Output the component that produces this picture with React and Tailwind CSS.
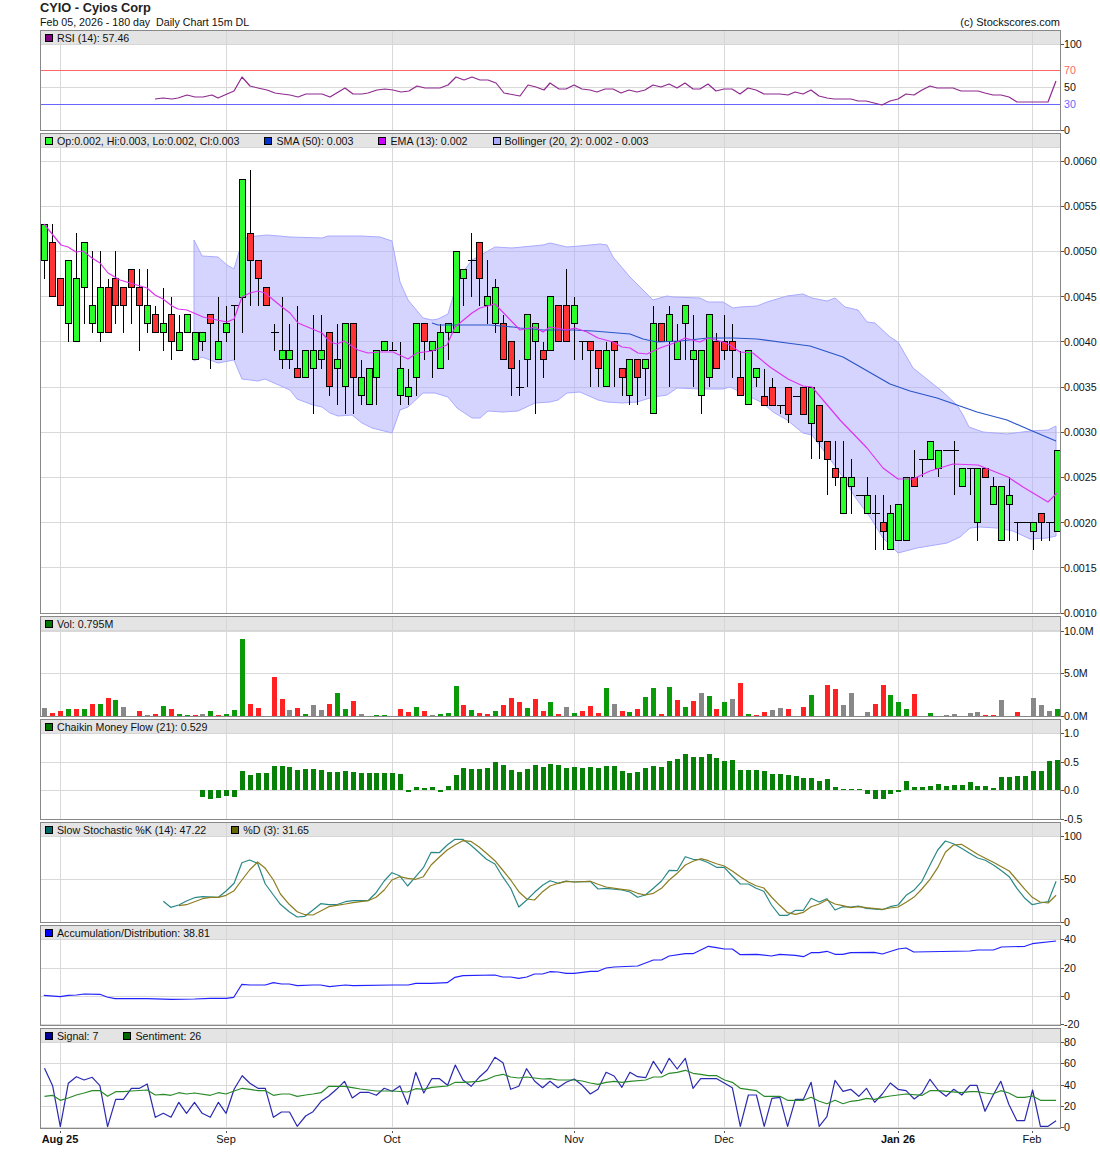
import React from 'react';

const SANS = "font-['Liberation_Sans',Arial,sans-serif]";
const GRID_X = [60, 226, 392, 574, 724, 898, 1032];
const barX = (i) => Math.round(44.3 + 7.908 * i);
const snap = (v) => Math.floor(v) + 0.5;
const priceY = (p) => 613 - (p - 10) * 9.04;

// flat x,y pairs read off the chart, scaled back to page pixels
const toPts = (flat, x0 = 0, sx = 1, y0 = 0, sy = 1) => {
  const out = [];
  for (let i = 0; i < flat.length; i += 2) out.push(`${(x0 + flat[i] / sx).toFixed(1)},${(y0 + flat[i + 1] / sy).toFixed(1)}`);
  return out;
};

// kind, body top, body bottom, high, low (in 0.0001)
const CANDLES = [
  ['g',53,49,53,47],['r',51,45,53,45],['r',47,44,47,44],['g',49,42,49,40],['g',47,40,52,40],['g',51,46,51,42],['g',44,42,50,41],['g',46,41,50,40],
  ['r',46,41,47,41],['r',47,44,50,42],['r',46,44,46,41],['r',48,46,48,42],['r',46,44,48,39],['g',44,42,48,41],['r',43,41,44,41],['g',42,41,46,39],
  ['r',43,40,45,38],['g',41,39,43,39],['g',43,41,43,41],['g',41,38,41,38],['g',41,40,41,39],['r',43,42,43,37],['g',40,38,45,38],['g',42,41,44,40],
  ['d',44,44,44,38],['g',58,45,58,41],['r',52,49,59,44],['r',49,47,49,44],['r',46,44,46,44],['d',41,41,42,39],['g',39,38,45,37],['g',39,38,42,37],
  ['r',37,36,44,36],['g',39,36,39,36],['g',39,37,43,32],['g',39,38,43,37],['r',41,35,41,34],['g',38,37,42,33],['g',42,35,42,32],['r',42,36,42,32],
  ['g',36,34,38,33],['g',37,33,37,33],['g',39,36,39,33],['g',40,39,40,39],['d',39,39,40,39],['g',37,34,40,33],['g',35,34,37,33],['g',42,36,42,34],
  ['r',42,40,42,38],['g',40,39,40,36],['g',41,37,42,37],['g',42,41,42,38],['g',50,41,50,41],['g',48,47,48,44],['d',49,49,52,45],['r',51,47,51,44],
  ['g',45,44,49,42],['g',46,42,47,41],['r',42,38,43,38],['r',40,37,40,34],['d',35,35,38,34],['g',43,38,43,35],['g',42,40,42,32],['r',39,38,40,36],
  ['g',45,39,45,39],['r',44,40,44,40],['r',44,40,48,40],['g',44,42,45,38],['d',40,40,40,38],['r',40,39,40,35],['r',39,37,39,35],['g',39,35,40,35],
  ['r',40,39,40,35],['r',37,36,37,34],['g',38,34,38,33],['r',38,36,38,33],['g',38,37,38,34],['g',42,32,44,32],['r',42,40,42,40],['g',43,40,44,35],
  ['g',40,38,42,38],['g',44,42,44,38],['g',39,38,43,35],['g',39,34,39,32],['g',43,36,43,35],['r',40,37,41,37],['r',40,39,43,38],['r',40,39,42,36],
  ['r',36,34,39,34],['g',39,33,39,33],['g',37,36,37,35],['r',34,33,37,33],['r',35,33,36,33],['d',33,33,33,32],['r',35,32,35,31],['d',34,34,34,34],
  ['r',35,32,35,32],['g',35,31,35,27],['r',33,29,33,27],['r',29,27,29,23],['r',26,25,29,24],['g',25,21,29,21],['g',25,24,27,21],['d',23,23,23,23],
  ['g',23,21,25,21],['d',21,21,23,17],['r',20,19,23,17],['g',21,17,22,17],['g',22,18,22,18],['g',25,18,25,18],['r',25,24,28,24],['d',27,27,27,25],
  ['g',29,27,29,27],['g',28,26,28,25],['d',28,28,28,28],['d',28,28,29,23],['g',26,24,26,24],['d',26,26,26,23],['g',26,20,26,18],['r',26,25,26,25],
  ['g',24,22,25,22],['g',24,18,24,18],['g',23,22,25,18],['d',20,20,20,18],['d',20,20,20,20],['g',20,19,20,17],['r',21,20,21,18],['d',20,20,20,18],
  ['g',28,19,28,19],
];

const BB_UP = [194,240,202,256,218,257,227,265,234,269,239,252,247,237,267,235,290,237,322,238,328,236,360,236,380,237,392,241,400,282,408,300,423,318,432,320,438,319,448,314,455,290,463,272,472,260,495,247,512,248,543,245,550,243,567,247,580,246,600,244,607,245,613,257,630,277,653,300,667,296,673,297,700,298,708,302,723,302,733,308,740,307,757,306,767,302,787,296,803,294,812,298,827,301,835,298,845,307,858,310,867,322,875,323,890,337,898,342,913,368,943,392,957,405,963,415,969,427,983,432,1007,434,1030,431,1048,430,1056,426];
const BB_LOW = [194,361,202,357,218,363,234,360,242,379,258,381,265,379,290,390,297,399,313,405,322,407,330,413,338,416,352,415,362,423,372,428,392,433,400,410,408,407,423,393,435,393,448,397,457,408,472,418,480,418,488,411,503,412,518,411,535,403,550,402,558,400,567,393,580,392,598,400,607,402,622,403,637,402,653,397,667,395,677,388,700,389,723,389,730,387,763,403,773,412,787,420,803,433,812,435,827,455,843,477,855,497,870,517,883,538,898,553,917,548,947,543,960,537,970,528,980,527,997,528,1013,531,1030,539,1047,538,1056,536];
const SMA = [432,323,438,325,460,325,490,325,513,327,520,328,543,330,573,330,593,331,630,334,643,339,657,342,680,341,708,338,733,338,757,339,787,343,810,346,843,357,890,384,910,391,937,398,977,412,1007,420,1030,430,1056,441];
const EMA = [44,224,61,245,68,247,76,252,83,251,92,258,100,263,108,273,120,280,130,283,147,288,155,295,163,299,172,306,178,309,187,310,203,317,217,320,227,322,234,319,242,297,250,293,258,291,265,293,282,307,290,313,298,323,322,333,330,342,337,344,344,341,358,350,368,353,380,352,393,352,408,359,417,353,432,351,447,345,455,327,472,313,480,308,495,304,520,330,535,327,543,332,550,327,567,330,575,328,587,332,598,338,613,342,622,347,630,348,638,353,647,354,660,348,677,342,685,338,700,342,708,338,723,342,730,345,740,352,753,353,770,367,788,379,803,386,812,387,840,420,867,448,883,468,898,479,913,479,930,471,953,464,978,465,1008,477,1023,487,1048,502,1057,493];
const RSI = [155,99,163,98,172,99,178,98,187,95,195,97,203,97,212,95,218,98,227,94,234,91,242,77,250,86,258,88,267,90,275,93,282,94,290,95,298,97,306,94,322,94,330,97,345,88,353,94,362,94,368,93,377,90,385,89,393,90,401,92,409,91,417,86,425,88,440,88,448,85,456,77,464,80,472,77,480,80,488,80,496,83,504,93,520,96,528,85,536,87,544,90,550,83,559,89,566,89,574,85,582,89,590,90,597,92,605,89,613,89,621,93,629,90,637,92,645,90,653,85,661,87,669,84,677,88,685,83,693,89,700,89,708,84,716,91,724,89,732,89,740,94,748,88,756,90,764,94,780,94,788,95,795,92,803,94,811,90,819,96,827,98,834,99,851,99,858,101,866,101,882,105,890,101,898,99,906,94,914,95,922,90,930,86,937,88,953,88,961,91,978,91,985,93,993,95,1001,95,1009,97,1017,102,1048,102,1056,81];

const VOL = [['a',8],['r',3],['r',5],['g',7],['r',7],['g',7],['r',12],['g',12],['r',18],['g',16],['a',9],['a',0],['r',5],['a',1],['r',2],['g',10],['r',7],['g',2],['g',1],['r',1],['a',2],['g',5],['r',1],['g',2],['g',6],['g',77],['r',12],['r',8],['a',0],['r',39],['r',17],['a',6],['r',8],['g',2],['a',11],['a',6],['r',12],['g',23],['g',7],['r',15],['a',2],['a',0],['g',1],['g',1],['a',0],['r',7],['r',4],['g',9],['r',5],['a',1],['g',2],['g',3],['g',30],['r',11],['g',6],['r',3],['r',2],['g',5],['r',11],['r',18],['r',14],['g',8],['r',17],['r',5],['g',14],['r',2],['a',9],['g',3],['r',5],['r',10],['r',3],['g',28],['a',12],['r',5],['g',4],['r',7],['g',19],['g',28],['r',2],['g',29],['r',16],['g',9],['r',15],['a',23],['g',20],['r',7],['g',14],['a',17],['r',33],['g',2],['r',1],['r',4],['a',6],['a',8],['r',7],['a',0],['r',9],['g',21],['a',0],['r',31],['r',27],['a',11],['a',23],['a',0],['a',4],['r',12],['r',31],['g',21],['g',14],['g',7],['r',22],['a',0],['g',3],['a',0],['a',1],['a',2],['a',0],['a',3],['a',4],['r',1],['r',1],['a',16],['a',0],['r',4],['a',0],['a',18],['a',11],['a',5],['g',7]];
const CMF = [0,0,0,0,0,0,0,0,0,0,0,0,0,0,0,0,0,0,0,0,-7,-9,-8,-6,-7,19,15,17,17,24,24,23,20,21,21,20,18,18,19,18,17,17,17,17,17,16,-2,3,2,3,-2,4,15,22,21,21,22,28,25,20,18,21,25,23,26,25,22,23,22,23,22,24,24,19,17,18,22,24,23,29,31,36,33,33,36,32,29,30,20,20,20,19,16,16,15,14,12,12,9,11,3,1,1,1,-4,-9,-9,-4,-2,9,3,3,4,6,4,5,5,8,4,4,2,13,13,14,14,19,19,29,30];

const STOCH_K = [...toPts([466,244,487,262,510,255,532,243,555,233,578,230,623,232,645,213,668,190,690,128,712,120,735,130,757,192,780,225,800,253,825,275,848,291,870,289,893,270,915,251,938,254,960,254,985,245,1007,242,1050,242,1073,218,1096,183,1118,158,1140,167,1163,198,1186,170,1208,143,1230,97,1253,98,1276,75,1298,58,1320,58,1343,75,1366,97,1388,118,1412,132,1434,170,1457,205,1480,261,1503,240,1525,217,1548,196], 0, 2.853, 820, 3), ...toPts([0,182,23,190,46,183,69,186,115,184,137,207,160,205,205,210,228,216,250,232,272,225,295,205,318,183,340,151,363,152,386,110,408,118,430,119,452,128,475,142,497,142,520,168,543,192,566,192,588,205,610,214,632,255,655,286,678,286,700,271,723,271,745,235,768,246,790,236,813,270,835,260,858,261,880,258,902,265,948,269,970,260,993,255,1016,226,1038,211,1061,184,1084,135,1106,90,1128,63,1151,71,1174,85,1197,100,1220,114,1242,121,1265,135,1288,152,1310,170,1332,205,1355,235,1376,254,1398,249,1421,245,1444,184], 550, 2.853, 820, 3)];
const STOCH_D = [...toPts([510,257,532,254,555,245,578,236,600,232,623,232,645,226,668,212,690,180,712,150,735,126,757,145,780,180,800,222,825,253,848,275,870,284,893,285,915,273,938,260,960,256,985,252,1007,248,1050,242,1073,232,1096,210,1118,180,1140,170,1163,175,1186,178,1208,170,1230,135,1253,112,1276,90,1298,75,1320,62,1343,64,1366,80,1388,100,1412,122,1434,150,1457,180,1480,215,1503,237,1525,240,1548,215], 0, 2.853, 820, 3), ...toPts([0,198,23,190,46,184,69,186,115,184,137,193,160,201,205,208,228,211,250,220,272,225,295,220,318,205,340,180,363,160,386,135,408,124,430,116,452,122,475,131,497,138,520,153,543,170,566,186,588,197,610,204,632,231,655,256,678,278,700,283,723,277,745,260,768,252,790,240,813,252,835,257,858,263,880,260,902,263,948,268,970,264,993,261,1016,247,1038,232,1061,207,1084,178,1106,143,1128,97,1151,75,1174,73,1197,88,1220,103,1242,115,1265,127,1288,140,1310,153,1332,180,1355,208,1376,232,1398,246,1421,249,1444,226], 550, 2.853, 820, 3)];
const AD = [...toPts([125,526,172,530,195,526,218,525,240,522,285,523,305,531,328,536,420,536,490,538,555,537,600,535,645,535,667,532,690,493,713,495,757,495,780,488,803,492,825,492,848,497,893,495,915,495,940,500,985,495,1007,497,1120,495,1165,495,1186,490,1230,490,1276,488,1298,472,1321,467,1412,465,1434,471,1457,471,1480,475,1503,471,1525,462,1548,462], 0, 2.853, 820, 3), ...toPts([0,455,23,456,46,460,69,460,115,454,137,454,160,444,183,441,250,438,295,420,318,420,340,408,386,401,408,401,452,379,475,383,497,387,520,387,543,404,590,403,632,408,655,403,700,406,723,410,745,398,768,398,790,394,813,403,835,403,858,398,925,397,948,402,993,387,1016,384,1038,396,1198,393,1220,390,1265,390,1288,381,1355,379,1376,371,1444,363], 550, 2.853, 820, 3)];
const SIGNAL = [...toPts([127,145,150,197,172,320,195,190,218,170,240,180,263,172,285,197,307,320,330,238,352,238,375,205,398,205,420,192,443,292,466,280,488,292,510,247,532,280,555,247,577,280,600,292,623,247,645,280,668,208,691,167,713,190,736,205,757,205,780,292,803,276,826,276,848,319,872,288,893,275,916,244,938,228,960,208,983,184,1005,234,1028,217,1051,217,1074,226,1096,205,1119,214,1141,198,1163,253,1186,157,1209,219,1232,176,1254,176,1277,196,1299,135,1321,180,1344,199,1367,172,1390,150,1412,112,1435,128,1457,208,1480,199,1502,146,1525,183,1548,203], 0, 2.853, 1020, 3), ...toPts([0,184,23,203,46,187,69,177,92,196,115,222,137,208,160,157,183,168,205,202,228,157,250,170,273,173,295,124,318,160,340,115,363,147,386,115,408,205,430,176,476,176,498,190,520,203,543,319,566,225,589,225,611,319,633,235,656,232,678,319,700,238,723,238,745,187,768,319,790,290,813,181,836,214,858,208,881,229,903,205,926,247,948,222,971,189,993,208,1016,212,1039,237,1062,219,1084,178,1107,210,1130,229,1152,208,1175,225,1198,196,1218,196,1241,274,1263,228,1286,184,1309,253,1332,302,1354,302,1377,210,1399,319,1421,319,1444,302], 550, 2.853, 1020, 3)];
const SENTIMENT = [...toPts([127,229,150,226,172,241,195,234,218,225,240,219,263,212,285,212,307,229,330,215,352,215,375,213,420,210,443,225,466,223,488,226,510,218,532,222,555,219,600,226,623,218,645,222,668,213,691,205,713,208,736,212,757,212,780,226,803,222,826,222,848,229,872,225,893,222,916,218,938,199,983,199,1005,203,1028,207,1074,213,1119,213,1163,216,1186,206,1209,208,1232,202,1277,198,1299,187,1321,187,1367,184,1390,178,1412,168,1435,163,1457,171,1480,174,1502,171,1548,177], 0, 2.853, 1020, 3), ...toPts([0,176,23,180,69,180,92,183,115,189,137,193,160,187,183,184,205,187,228,184,273,180,295,171,318,171,340,160,363,157,386,151,408,160,430,163,452,167,476,167,498,180,520,187,543,205,589,212,611,229,656,229,678,241,723,241,745,232,768,244,790,251,813,241,836,251,858,244,881,241,903,235,926,238,948,232,971,228,1016,222,1062,226,1084,212,1107,212,1175,218,1198,215,1218,215,1241,219,1263,222,1286,212,1309,219,1332,232,1354,232,1377,228,1399,241,1444,241], 550, 2.853, 1020, 3)];

const Line = ({ pts, color }) => (
  <polyline points={pts.join(' ')} fill="none" stroke={color} strokeWidth="1.2" strokeLinejoin="round" />
);

function Legend({ items }) {
  return (
    <div className="relative flex items-center h-[14px] pt-[1px] pl-[4px] gap-[25px] bg-[#e4e4e4] border-b border-[#d6d6d6] text-[10.67px] leading-[12px] text-[#111] whitespace-nowrap">
      <svg className="absolute left-0 top-0" width="1019" height="14" viewBox="41 0 1019 14">
        {GRID_X.map((x) => <line key={x} x1={x + 0.5} x2={x + 0.5} y1="0" y2="14" stroke="#d6d6d6" />)}
      </svg>
      {items.map(([swatch, label]) => (
        <div key={label} className="relative flex items-center gap-[4px]">
          <span className={`w-[8px] h-[8px] border border-black ${swatch}`} />
          <span>{label}</span>
        </div>
      ))}
    </div>
  );
}

// one indicator: bordered panel with its legend, plot and the scale on the right
function Panel({ top, bodyHeight, items, ticks, children }) {
  const y0 = top + 15;
  const total = bodyHeight + 16;
  return (
    <div className="flex">
      <div className="w-[1021px] border border-[#888] shrink-0">
        <Legend items={items} />
        <svg className="block" width="1019" height={bodyHeight} viewBox={`41 ${y0} 1019 ${bodyHeight}`}>
          {GRID_X.map((x) => <line key={x} x1={x + 0.5} x2={x + 0.5} y1={y0} y2={y0 + bodyHeight} stroke="#d9d9d9" />)}
          {ticks.filter((t) => t.y >= y0).map((t) => <line key={t.label} x1="41" x2="1060" y1={snap(t.y)} y2={snap(t.y)} stroke="#d9d9d9" />)}
          {children}
        </svg>
      </div>
      <svg className="block overflow-visible" width="39" height={total} viewBox={`1061 ${top} 39 ${total}`}>
        {ticks.map((t) => (
          <g key={t.label}>
            {!t.noTick && <line x1="1061" x2="1064" y1={snap(t.y)} y2={snap(t.y)} stroke="#555" />}
            <text x="1064" y={Math.round(t.y) + 4} fontSize="10.67" fill={t.color || '#111'}>{t.label}</text>
          </g>
        ))}
      </svg>
    </div>
  );
}

function Candles() {
  const fill = { g: '#2bff2b', r: '#ff3333' };
  return CANDLES.map(([kind, a, b, hi, lo], i) => {
    const cx = barX(i) + 0.5;
    return (
      <g key={i} shapeRendering="crispEdges">
        {hi !== lo && <line x1={cx} x2={cx} y1={priceY(hi)} y2={priceY(lo)} stroke="#000" />}
        {kind === 'd'
          ? <line x1={cx - 4} x2={cx + 4} y1={snap(priceY(a))} y2={snap(priceY(a))} stroke="#000" />
          : <rect x={cx - 3} y={snap(priceY(a))} width="6" height={Math.round(priceY(b) - priceY(a))} fill={fill[kind]} stroke="#000" />}
      </g>
    );
  });
}

export default function App() {
  const volFill = { g: '#0a9a0a', r: '#ff2222', a: '#888888' };
  const bb = toPts(BB_UP).concat(toPts(BB_LOW).reverse()).join(' ');
  const priceTicks = [60, 55, 50, 45, 40, 35, 30, 25, 20, 15, 10].map((p) => ({ y: priceY(p), label: (p / 10000).toFixed(4) }));

  return (
    <div className={`h-[1159px] w-[1100px] bg-white text-[#111] ${SANS}`}>
      <div className="ml-[40px] w-[1021px] h-[30px] flex justify-between items-end">
        <div>
          <div className="text-[12.8px] leading-[15px] font-bold text-[#222]">CYIO - Cyios Corp</div>
          <div className="text-[10.67px] leading-[15px] whitespace-pre">Feb 05, 2026 - 180 day  Daily Chart 15m DL</div>
        </div>
        <div className="text-[11px] leading-[15px] mr-[1px]">(c) Stockscores.com</div>
      </div>

      <div className="ml-[40px] flex flex-col gap-[2px]">
        <Panel
          top={30}
          bodyHeight={85}
          items={[['bg-[#800080]', 'RSI (14): 57.46']]}
          ticks={[
            { y: 44, label: '100' },
            { y: 70, label: '70', color: '#ff6666', noTick: true },
            { y: 87, label: '50', noTick: true },
            { y: 104, label: '30', color: '#6666ff', noTick: true },
            { y: 130, label: '0' },
          ]}
        >
          <line x1="41" x2="1060" y1="70.5" y2="70.5" stroke="#ff6666" />
          <line x1="41" x2="1060" y1="104.5" y2="104.5" stroke="#6666ff" />
          <Line pts={toPts(RSI)} color="#8e2a8e" />
        </Panel>

        <Panel
          top={133}
          bodyHeight={465}
          items={[
            ['bg-[#2bff2b]', 'Op:0.002, Hi:0.003, Lo:0.002, Cl:0.003'],
            ['bg-[#0033cc]', 'SMA (50): 0.003'],
            ['bg-[#cc00ff]', 'EMA (13): 0.002'],
            ['bg-[#aaaaff]', 'Bollinger (20, 2): 0.002 - 0.003'],
          ]}
          ticks={priceTicks}
        >
          <polygon points={bb} fill="#aaaaff" fillOpacity="0.5" stroke="#aaaaff" strokeWidth="1" />
          <Candles />
          <Line pts={toPts(SMA)} color="#2a55c8" />
          <Line pts={toPts(EMA)} color="#dd33ee" />
        </Panel>

        <Panel
          top={616}
          bodyHeight={85}
          items={[['bg-[#007700]', 'Vol: 0.795M']]}
          ticks={[{ y: 631, label: '10.0M' }, { y: 673, label: '5.0M' }, { y: 716, label: '0.0M' }]}
        >
          <g shapeRendering="crispEdges">
            {VOL.map(([c, h], i) => h > 0 && <rect key={i} x={barX(i) - 2} y={716 - h} width="5" height={h} fill={volFill[c]} />)}
          </g>
        </Panel>

        <Panel
          top={719}
          bodyHeight={85}
          items={[['bg-[#007700]', 'Chaikin Money Flow (21): 0.529']]}
          ticks={[{ y: 733, label: '1.0' }, { y: 762, label: '0.5' }, { y: 790, label: '0.0' }, { y: 819, label: '-0.5' }]}
        >
          <g shapeRendering="crispEdges">
            {CMF.map((h, i) => h !== 0 && <rect key={i} x={barX(i) - 2} y={h > 0 ? 790 - h : 790} width="5" height={Math.abs(h)} fill="#078007" />)}
          </g>
        </Panel>

        <Panel
          top={822}
          bodyHeight={85}
          items={[['bg-[#006666]', 'Slow Stochastic %K (14): 47.22'], ['bg-[#666600]', '%D (3): 31.65']]}
          ticks={[{ y: 836, label: '100' }, { y: 879, label: '50' }, { y: 922, label: '0' }]}
        >
          <Line pts={STOCH_K} color="#2a8888" />
          <Line pts={STOCH_D} color="#8b7d20" />
        </Panel>

        <Panel
          top={925}
          bodyHeight={85}
          items={[['bg-[#0000ff]', 'Accumulation/Distribution: 38.81']]}
          ticks={[{ y: 939, label: '40' }, { y: 968, label: '20' }, { y: 996, label: '0' }, { y: 1024, label: '-20' }]}
        >
          <Line pts={AD} color="#2222ff" />
        </Panel>

        <Panel
          top={1028}
          bodyHeight={85}
          items={[['bg-[#000099]', 'Signal: 7'], ['bg-[#006600]', 'Sentiment: 26']]}
          ticks={[{ y: 1042, label: '80' }, { y: 1063, label: '60' }, { y: 1085, label: '40' }, { y: 1106, label: '20' }, { y: 1127, label: '0' }]}
        >
          <Line pts={SIGNAL} color="#2a2ab0" />
          <Line pts={SENTIMENT} color="#2a8a2a" />
        </Panel>

        <svg className="block" width="1021" height="28" viewBox="40 1129 1021 28">
          {[['Aug 25', 60, true], ['Sep', 226], ['Oct', 392], ['Nov', 574], ['Dec', 724], ['Jan 26', 898, true], ['Feb', 1032]].map(([label, x, bold]) => (
            <g key={label}>
              <line x1={x + 0.5} x2={x + 0.5} y1="1129" y2="1131" stroke="#555" />
              <text x={x} y="1141" textAnchor="middle" fontSize="11" fontWeight={bold ? 700 : 400} fill="#111">{label}</text>
            </g>
          ))}
        </svg>
      </div>
    </div>
  );
}
